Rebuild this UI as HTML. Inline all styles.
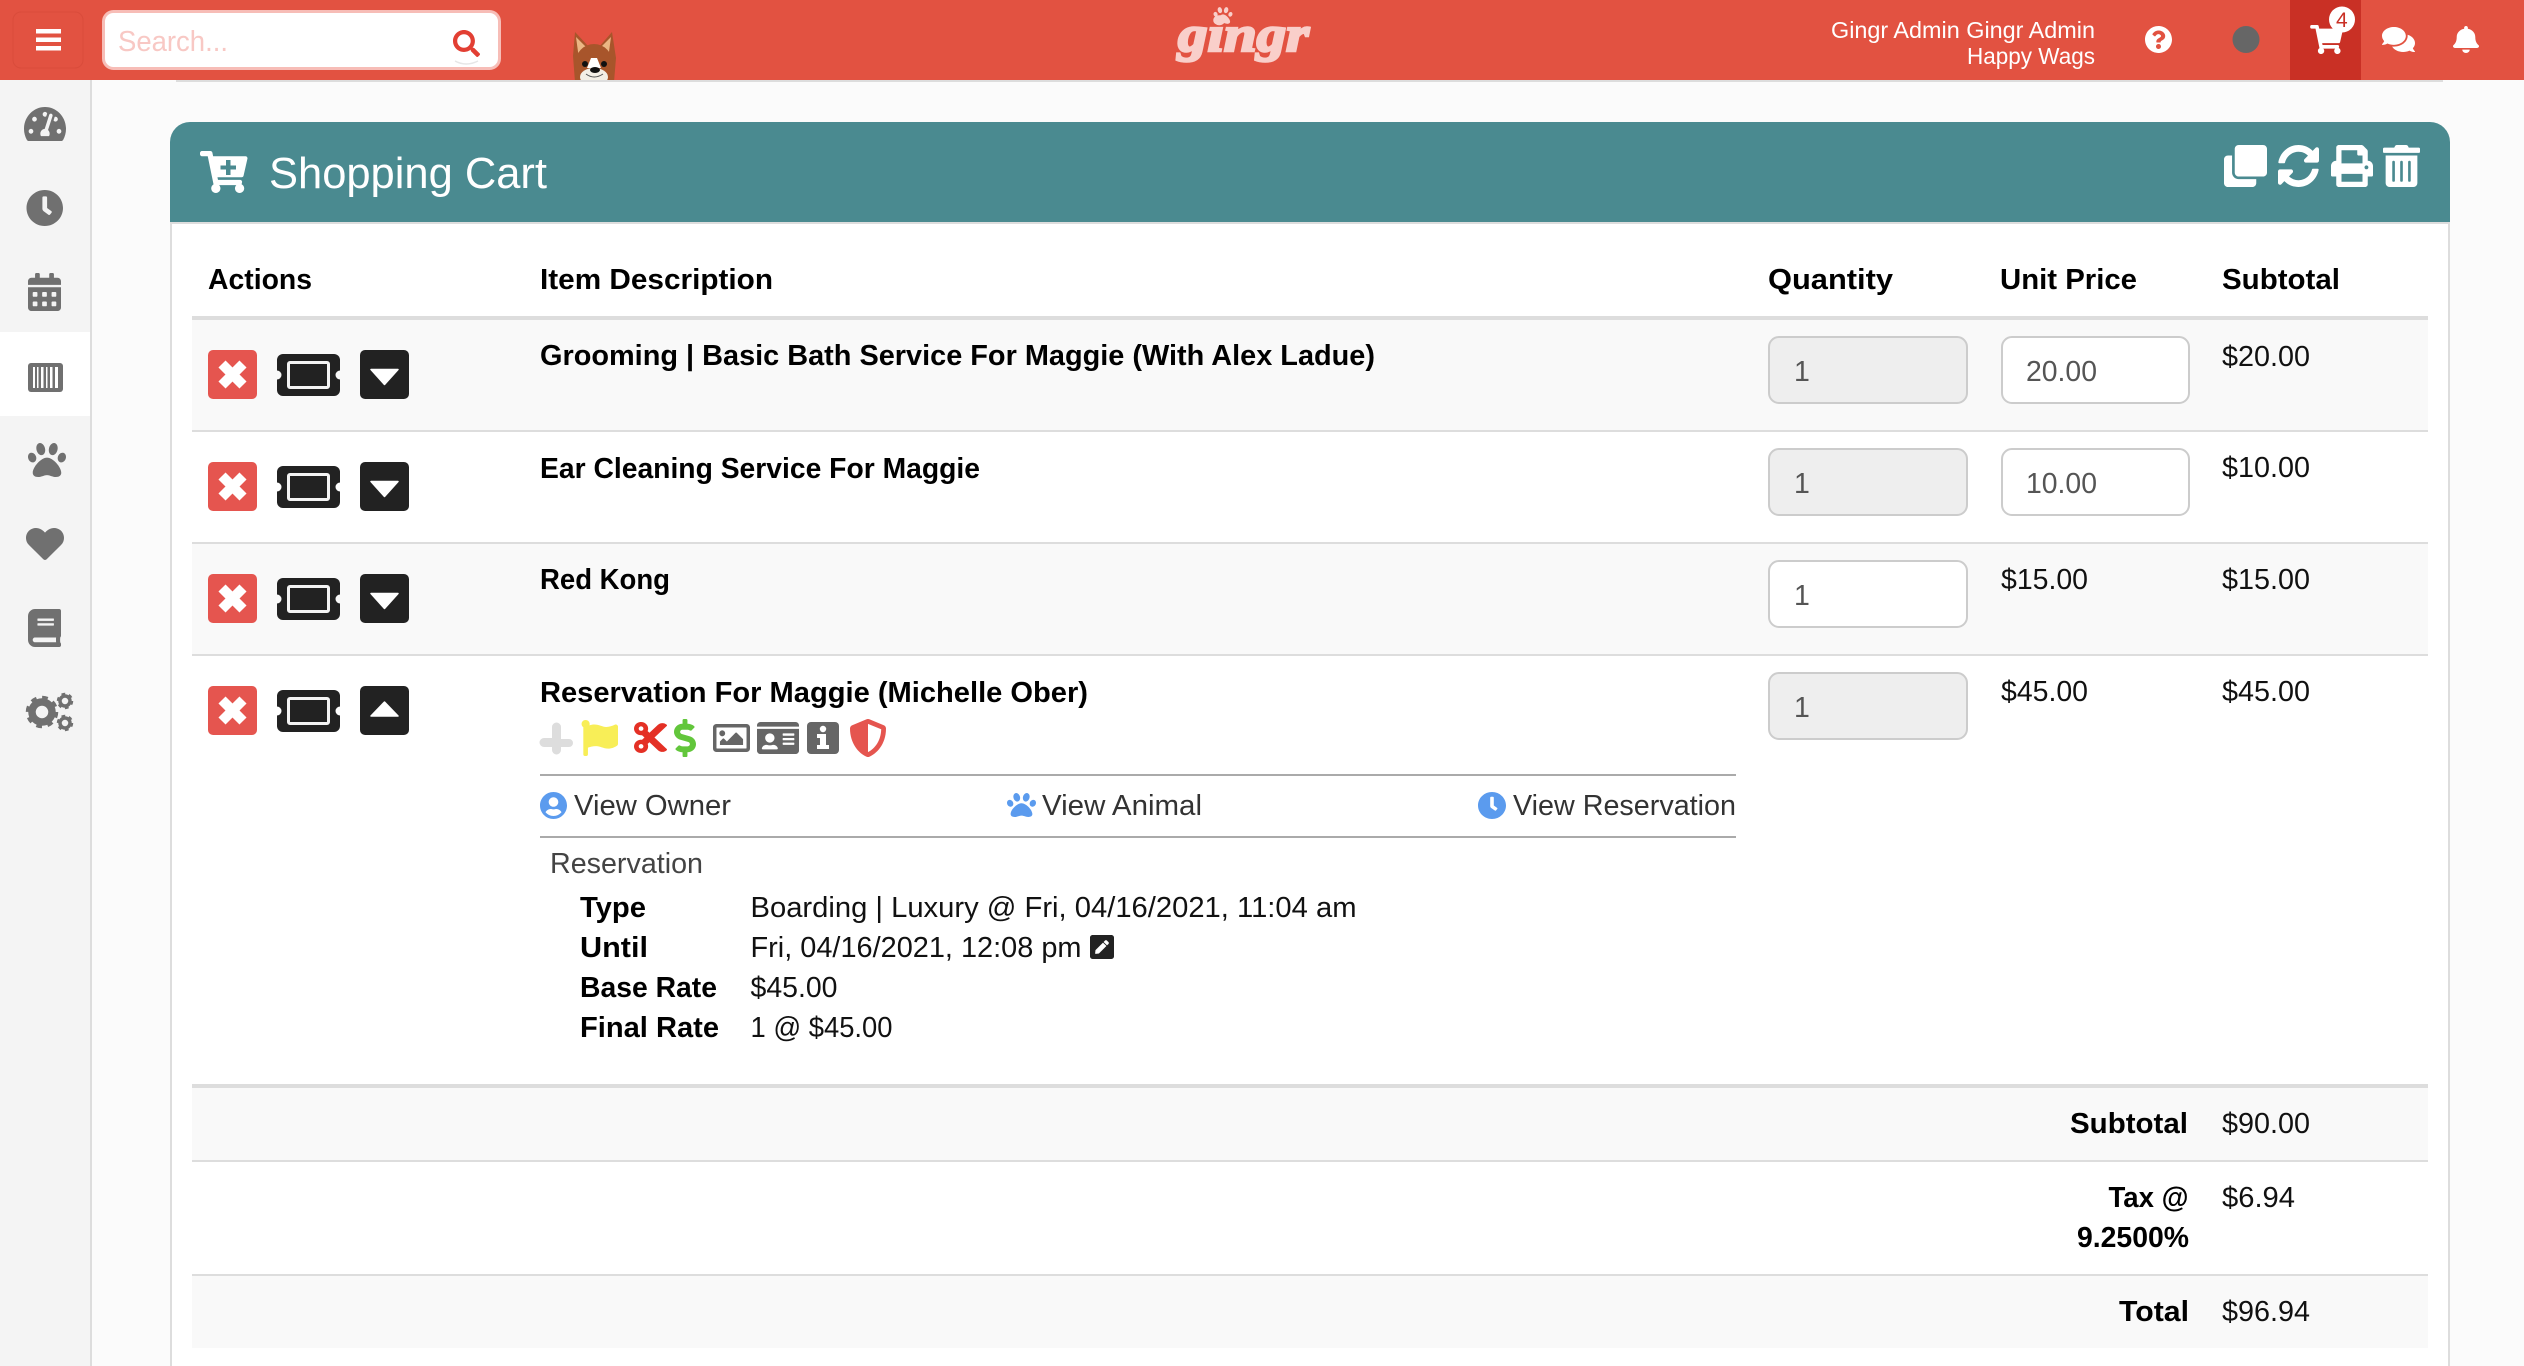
<!DOCTYPE html>
<html lang="en"><head><meta charset="utf-8"><title>Shopping Cart</title>
<style>
html,body{margin:0;padding:0;background:#fbfbfb}
svg.page{display:block;position:absolute;left:0;top:0}
text{font-family:"Liberation Sans",sans-serif;font-size:28.5px;fill:#111}
.b{font-weight:700;fill:#000}
.v{fill:#333}
.i{fill:#555}
</style></head><body>
<svg class="page" xmlns="http://www.w3.org/2000/svg" width="2524" height="1366" viewBox="0 0 2524 1366">
<defs>
<clipPath id="hc"><rect x="0" y="0" width="2524" height="80"/></clipPath>
<g id="xb"><rect width="49" height="49" rx="5" fill="#E5554F"/><path d="M14 14L35 35M35 14L14 35" stroke="#fff" stroke-width="10" fill="none"/></g>
<g id="dn"><rect width="49" height="49" rx="5" fill="#222"/><path d="M11 19.5H38L24.5 34.5Z" fill="#fff" stroke="#fff" stroke-width="1.5" stroke-linejoin="round"/></g>
<g id="up"><rect width="49" height="49" rx="5" fill="#222"/><path d="M11 30H38L24.5 16Z" fill="#fff" stroke="#fff" stroke-width="1.5" stroke-linejoin="round"/></g>
</defs>

<!-- page backgrounds -->
<rect width="2524" height="1366" fill="#fbfbfb"/>
<rect x="0" y="80" width="90" height="1286" fill="#f4f4f4"/>
<rect x="90" y="80" width="2" height="1286" fill="#ddd"/>
<rect x="0" y="332" width="90" height="84" fill="#fff"/>
<rect x="176" y="80" width="2267" height="2" fill="#ddd"/>

<!-- header -->
<rect width="2524" height="80" fill="#E25241"/>
<rect x="13" y="12" width="70" height="56" rx="8" fill="#E25241" stroke="#d94c3b" stroke-width="1"/>
<rect x="36" y="29" width="25" height="4.5" fill="#fff"/><rect x="36" y="37.5" width="25" height="4.5" fill="#fff"/><rect x="36" y="46" width="25" height="4.5" fill="#fff"/>
<rect x="103.5" y="11.5" width="396" height="57" rx="10" fill="#fff" stroke="#f7bdb7" stroke-width="3"/>
<text x="118" y="51" style="fill:#f8c8c4" textLength="110" lengthAdjust="spacingAndGlyphs">Search...</text>
<svg x="452" y="30" width="29" height="27" viewBox="0 0 512 512"><path fill="#E23F33" d="M505 442.7L405.3 343c-4.5-4.5-10.6-7-17-7H372c27.6-35.3 44-79.7 44-128C416 93.1 322.9 0 208 0S0 93.1 0 208s93.1 208 208 208c48.3 0 92.7-16.4 128-44v16.3c0 6.4 2.5 12.5 7 17l99.7 99.7c9.4 9.4 24.6 9.4 33.9 0l28.3-28.3c9.4-9.4 9.4-24.6.1-34zM208 336c-70.7 0-128-57.2-128-128 0-70.7 57.2-128 128-128 70.7 0 128 57.2 128 128 0 70.7-57.2 128-128 128z"/></svg>
<path d="M455 61Q466 67 478 61" fill="none" stroke="#e6e6e6" stroke-width="1.5"/>

<!-- dog -->
<g clip-path="url(#hc)">
<path d="M575 32L589 47L599 47L612 32L616 58L614 82H575L573 56Z" fill="#A8552B"/>
<path d="M576 37L587 48L579 59Z" fill="#EBB684"/><path d="M611 37L600 48L608 59Z" fill="#EBB684"/>
<ellipse cx="594" cy="64" rx="19" ry="20" fill="#A8552B"/>
<path d="M591 58H597L601 68H587Z" fill="#fff"/>
<ellipse cx="594" cy="77" rx="14" ry="9" fill="#F3EFE6"/>
<circle cx="585" cy="64" r="3" fill="#111"/><circle cx="604" cy="64" r="3" fill="#111"/>
<ellipse cx="595" cy="70" rx="5" ry="3" fill="#111"/>
<path d="M586 74Q594 80 603 74" fill="none" stroke="#555" stroke-width="1"/>
</g>

<!-- logo -->
<text x="1178" y="51" style="font-family:'Liberation Serif',serif;font-weight:700;font-style:italic;font-size:50px;fill:#F9CFCA;stroke:#F9CFCA;stroke-width:2.5px" textLength="131" lengthAdjust="spacingAndGlyphs">gingr</text>
<svg x="1213" y="6" width="20" height="19" viewBox="0 0 512 512"><path fill="#F9CFCA" d="M256 224c-79.41 0-192 122.76-192 200.25 0 34.9 26.81 55.75 71.74 55.75 48.84 0 81.09-25.08 120.26-25.08 39.51 0 71.85 25.08 120.26 25.08 44.93 0 71.74-20.85 71.74-55.75C448 346.76 335.41 224 256 224zm-147.28-12.61c-10.4-34.65-42.44-57.09-71.56-50.13-29.12 6.96-44.29 40.69-33.89 75.34 10.4 34.65 42.44 57.09 71.56 50.13 29.12-6.96 44.29-40.69 33.89-75.34zm84.72-20.78c30.94-8.14 46.42-49.94 34.58-93.36s-46.52-72.01-77.46-63.87-46.42 49.94-34.58 93.36c11.84 43.42 46.52 72.02 77.46 63.87zm281.39-29.34c-29.12-6.96-61.15 15.48-71.56 50.13-10.4 34.65 4.77 68.38 33.89 75.34 29.12 6.96 61.15-15.48 71.56-50.13 10.4-34.65-4.77-68.38-33.89-75.34zm-156.27 29.34c30.94 8.14 65.62-20.45 77.46-63.87 11.84-43.42-3.64-85.21-34.58-93.36s-65.62 20.45-77.46 63.87c-11.84 43.42 3.64 85.22 34.58 93.36z"/></svg>

<!-- header right -->
<text x="1831" y="38" style="font-size:23.5px;fill:#fff" textLength="264" lengthAdjust="spacingAndGlyphs">Gingr Admin Gingr Admin</text>
<text x="1967" y="64" style="font-size:23.5px;fill:#fff" textLength="128" lengthAdjust="spacingAndGlyphs">Happy Wags</text>
<svg x="2145" y="26" width="27" height="27" viewBox="8 8 496 496"><path fill="#fff" d="M504 256c0 136.997-111.043 248-248 248S8 392.997 8 256C8 119.083 119.043 8 256 8s248 111.083 248 248zM262.655 90c-54.497 0-89.255 22.957-116.549 63.758-3.536 5.286-2.353 12.415 2.715 16.258l34.699 26.31c5.205 3.947 12.621 3.008 16.665-2.122 17.864-22.658 30.113-35.797 57.303-35.797 20.429 0 45.698 13.148 45.698 32.958 0 14.976-12.363 22.667-32.534 33.976C247.128 238.528 216 254.941 216 296v4c0 6.627 5.373 12 12 12h56c6.627 0 12-5.373 12-12v-1.333c0-28.462 83.186-29.647 83.186-106.667 0-58.002-60.165-102-116.531-102zM256 338c-25.365 0-46 20.635-46 46 0 25.364 20.635 46 46 46s46-20.636 46-46c0-25.365-20.635-46-46-46z"/></svg>
<circle cx="2246" cy="39.5" r="13.5" fill="#666"/>
<rect x="2290" y="0" width="71" height="80" fill="#C93025"/>
<svg x="2310" y="25" width="33" height="29" viewBox="0 0 576 512"><path fill="#fff" d="M528.12 301.319l47.273-208C578.806 78.301 567.391 64 551.99 64H159.208l-9.166-44.81C147.758 8.021 137.93 0 126.529 0H24C10.745 0 0 10.745 0 24v16c0 13.255 10.745 24 24 24h69.883l70.248 343.435C147.325 417.1 136 435.222 136 456c0 30.928 25.072 56 56 56s56-25.072 56-56c0-15.674-6.447-29.835-16.824-40h209.647C430.447 426.165 424 440.326 424 456c0 30.928 25.072 56 56 56s56-25.072 56-56c0-22.172-12.888-41.332-31.579-50.405l5.517-24.276c3.413-15.018-8.002-29.319-23.403-29.319H218.117l-6.545-32h293.145c11.206 0 20.92-7.754 23.403-18.681z"/></svg>
<circle cx="2342" cy="19.5" r="13" fill="#fff"/>
<text x="2336" y="27" style="font-size:21px;fill:#C93025">4</text>
<svg x="2382" y="27" width="33" height="25" viewBox="0 32 576 448" preserveAspectRatio="none"><path fill="#fff" d="M416 192c0-88.4-93.1-160-208-160S0 103.6 0 192c0 34.3 14.1 65.9 38 92-13.4 30.2-35.5 54.2-35.8 54.5-2.2 2.3-2.8 5.7-1.5 8.7S4.8 352 8 352c36.6 0 66.9-12.3 88.7-25 32.2 15.7 70.3 25 111.3 25 114.9 0 208-71.6 208-160zm122 220c23.9-26 38-57.7 38-92 0-66.9-53.5-124.2-129.3-148.1.9 6.6 1.3 13.3 1.3 20.1 0 105.9-107.7 192-240 192-10.8 0-21.3-.8-31.7-1.9C207.8 439.6 281.8 480 368 480c41 0 79.1-9.2 111.3-25 21.8 12.7 52.1 25 88.7 25 3.2 0 6.1-1.9 7.3-4.8 1.3-2.9.7-6.3-1.5-8.7-.3-.3-22.4-24.2-35.8-54.5z"/></svg>
<svg x="2453" y="26" width="26" height="27" viewBox="0 0 448 512" preserveAspectRatio="none"><path fill="#fff" d="M224 512c35.32 0 63.97-28.65 63.97-64H160.03c0 35.35 28.65 64 63.97 64zm215.39-149.71c-19.32-20.76-55.47-51.99-55.47-154.29 0-77.7-54.48-139.9-127.94-155.16V32c0-17.67-14.32-32-31.98-32s-31.98 14.33-31.98 32v20.84C118.56 68.1 64.08 130.3 64.08 208c0 102.3-36.15 133.53-55.47 154.29-6 6.45-8.66 14.16-8.61 21.71.11 16.4 12.98 32 32.1 32h383.8c19.12 0 32-15.6 32.1-32 .05-7.55-2.61-15.27-8.61-21.71z"/></svg>

<!-- sidebar icons -->
<svg x="24" y="107" width="42" height="34" viewBox="0 32 576 448" preserveAspectRatio="none"><path fill="#707070" d="M288 32C128.94 32 0 160.94 0 320c0 52.8 14.25 102.26 39.06 144.8 5.61 9.62 16.3 15.2 27.44 15.2h443c11.14 0 21.83-5.58 27.44-15.2C561.75 422.26 576 372.8 576 320c0-159.06-128.94-288-288-288zm0 64c14.71 0 26.58 10.13 30.32 23.65-1.11 2.26-2.64 4.23-3.45 6.67l-9.22 27.67c-5.13 3.49-10.97 6.01-17.64 6.01-17.67 0-32-14.33-32-32S270.33 96 288 96zM96 384c-17.67 0-32-14.33-32-32s14.33-32 32-32 32 14.33 32 32-14.33 32-32 32zm48-160c-17.67 0-32-14.33-32-32s14.33-32 32-32 32 14.33 32 32-14.33 32-32 32zm246.77-72.41l-61.33 184C343.13 347.33 352 364.54 352 384c0 11.72-3.38 22.55-8.88 32H232.88c-5.5-9.45-8.88-20.28-8.88-32 0-33.94 26.5-61.43 59.9-63.59l61.34-184.01c4.17-12.56 17.73-19.45 30.36-15.17 12.57 4.19 19.35 17.77 15.17 30.36zm14.66 57.2l15.52-46.55c3.47-1.29 7.13-2.23 11.05-2.23 17.67 0 32 14.33 32 32s-14.33 32-32 32c-11.38-.01-20.89-6.28-26.57-15.22zM480 384c-17.67 0-32-14.33-32-32s14.33-32 32-32 32 14.33 32 32-14.33 32-32 32z"/></svg>
<svg x="26.5" y="190" width="36.5" height="36" viewBox="8 8 496 496" preserveAspectRatio="none"><path fill="#707070" d="M256,8C119,8,8,119,8,256S119,504,256,504,504,393,504,256,393,8,256,8Zm92.49,313h0l-20,25a16,16,0,0,1-22.49,2.5h0l-67-49.72a40,40,0,0,1-15-31.23V112a16,16,0,0,1,16-16h32a16,16,0,0,1,16,16V256l58,42.5A16,16,0,0,1,348.49,321Z"/></svg>
<svg x="28" y="273" width="33" height="38" viewBox="0 0 448 512" preserveAspectRatio="none"><path fill="#707070" d="M0 464c0 26.5 21.5 48 48 48h352c26.5 0 48-21.5 48-48V192H0v272zm320-196c0-6.6 5.4-12 12-12h40c6.6 0 12 5.4 12 12v40c0 6.6-5.4 12-12 12h-40c-6.6 0-12-5.4-12-12v-40zm0 128c0-6.6 5.4-12 12-12h40c6.6 0 12 5.4 12 12v40c0 6.6-5.4 12-12 12h-40c-6.6 0-12-5.4-12-12v-40zM192 268c0-6.6 5.4-12 12-12h40c6.6 0 12 5.4 12 12v40c0 6.6-5.4 12-12 12h-40c-6.6 0-12-5.4-12-12v-40zm0 128c0-6.6 5.4-12 12-12h40c6.6 0 12 5.4 12 12v40c0 6.6-5.4 12-12 12h-40c-6.6 0-12-5.4-12-12v-40zM64 268c0-6.6 5.4-12 12-12h40c6.6 0 12 5.4 12 12v40c0 6.6-5.4 12-12 12H76c-6.6 0-12-5.4-12-12v-40zm0 128c0-6.6 5.4-12 12-12h40c6.6 0 12 5.4 12 12v40c0 6.6-5.4 12-12 12H76c-6.6 0-12-5.4-12-12v-40zM400 64h-48V16c0-8.8-7.2-16-16-16h-32c-8.8 0-16 7.2-16 16v48H160V16c0-8.8-7.2-16-16-16h-32c-8.8 0-16 7.2-16 16v48H48C21.5 64 0 85.5 0 112v48h448v-48c0-26.5-21.5-48-48-48z"/></svg>
<rect x="28" y="363" width="35" height="29" rx="3" fill="#707070"/>
<g fill="#fff"><rect x="33" y="367" width="2" height="21"/><rect x="37" y="367" width="1.5" height="21"/><rect x="41" y="367" width="2.5" height="21"/><rect x="46" y="367" width="1.5" height="21"/><rect x="50" y="367" width="2.5" height="21"/><rect x="55" y="367" width="3" height="21"/></g>
<svg x="28" y="443" width="38" height="34" viewBox="0 32 512 448" preserveAspectRatio="none"><path fill="#707070" d="M256 224c-79.41 0-192 122.76-192 200.25 0 34.9 26.81 55.75 71.74 55.75 48.84 0 81.09-25.08 120.26-25.08 39.51 0 71.85 25.08 120.26 25.08 44.93 0 71.74-20.85 71.74-55.75C448 346.76 335.41 224 256 224zm-147.28-12.61c-10.4-34.65-42.44-57.09-71.56-50.13-29.12 6.96-44.29 40.69-33.89 75.34 10.4 34.65 42.44 57.09 71.56 50.13 29.12-6.96 44.29-40.69 33.89-75.34zm84.72-20.78c30.94-8.14 46.42-49.94 34.58-93.36s-46.52-72.01-77.46-63.87-46.42 49.94-34.58 93.36c11.84 43.42 46.52 72.02 77.46 63.87zm281.39-29.34c-29.12-6.96-61.15 15.48-71.56 50.13-10.4 34.65 4.77 68.38 33.89 75.34 29.12 6.96 61.15-15.48 71.56-50.13 10.4-34.65-4.77-68.38-33.89-75.34zm-156.27 29.34c30.94 8.14 65.62-20.45 77.46-63.87 11.84-43.42-3.64-85.21-34.58-93.36s-65.62 20.45-77.46 63.87c-11.84 43.42 3.64 85.22 34.58 93.36z"/></svg>
<svg x="26" y="528" width="38" height="32" viewBox="0 32 512 448" preserveAspectRatio="none"><path fill="#707070" d="M462.3 62.6C407.5 15.9 326 24.3 275.7 76.2L256 96.5l-19.7-20.3C186.1 24.3 104.5 15.9 49.7 62.6c-62.8 53.6-66.1 149.8-9.9 207.9l193.5 199.8c12.5 12.9 32.8 12.9 45.3 0l193.5-199.8c56.3-58.1 53-154.3-9.8-207.9z"/></svg>
<svg x="28" y="609" width="33" height="38" viewBox="0 0 448 512" preserveAspectRatio="none"><path fill="#707070" d="M448 360V24c0-13.3-10.7-24-24-24H96C43 0 0 43 0 96v320c0 53 43 96 96 96h328c13.3 0 24-10.7 24-24v-16c0-7.5-3.5-14.3-8.9-18.7-4.2-15.4-4.2-59.3 0-74.7 5.4-4.3 8.9-11.1 8.9-18.6zM128 134c0-3.3 2.7-6 6-6h212c3.3 0 6 2.7 6 6v20c0 3.3-2.7 6-6 6H134c-3.3 0-6-2.7-6-6v-20zm0 64c0-3.3 2.7-6 6-6h212c3.3 0 6 2.7 6 6v20c0 3.3-2.7 6-6 6H134c-3.3 0-6-2.7-6-6v-20zm253.4 250H96c-17.7 0-32-14.3-32-32 0-17.6 14.4-32 32-32h285.4c-1.9 17.1-1.9 46.9 0 64z"/></svg>
<g fill="none" stroke="#707070">
<circle cx="42" cy="712" r="10" stroke-width="7.5"/>
<circle cx="42" cy="712" r="14" stroke-width="4.5" stroke-dasharray="5.5 5.5"/>
<circle cx="65" cy="701" r="5" stroke-width="3.5"/>
<circle cx="65" cy="701" r="7" stroke-width="2.5" stroke-dasharray="3.66 3.67"/>
<circle cx="65" cy="723" r="5" stroke-width="3.5"/>
<circle cx="65" cy="723" r="7" stroke-width="2.5" stroke-dasharray="3.66 3.67"/>
</g>

<!-- panel -->
<rect x="170" y="222" width="2280" height="1144" fill="#fff"/>
<rect x="170" y="222" width="2" height="1144" fill="#ddd"/>
<rect x="2448" y="222" width="2" height="1144" fill="#ddd"/>
<rect x="170" y="222" width="2280" height="2" fill="#ddd"/>
<path d="M170 222V142A20 20 0 0 1 190 122H2430A20 20 0 0 1 2450 142V222Z" fill="#4A8A90"/>
<svg x="200" y="151" width="47.5" height="42" viewBox="0 0 576 512" preserveAspectRatio="none"><path fill="#fff" d="M528.12 301.319l47.273-208C578.806 78.301 567.391 64 551.99 64H159.208l-9.166-44.81C147.758 8.021 137.93 0 126.529 0H24C10.745 0 0 10.745 0 24v16c0 13.255 10.745 24 24 24h69.883l70.248 343.435C147.325 417.1 136 435.222 136 456c0 30.928 25.072 56 56 56s56-25.072 56-56c0-15.674-6.447-29.835-16.824-40h209.647C430.447 426.165 424 440.326 424 456c0 30.928 25.072 56 56 56s56-25.072 56-56c0-22.172-12.888-41.332-31.579-50.405l5.517-24.276c3.413-15.018-8.002-29.319-23.403-29.319H218.117l-6.545-32h293.145c11.206 0 20.92-7.754 23.403-18.681z"/></svg>
<path d="M226 160h4.5v5.5h5.5v4h-5.5v5.5h-4.5v-5.500h-5.500v-4h5.500z" fill="#4A8A90"/>
<text x="269" y="188" style="font-size:44px;fill:#fff" textLength="278" lengthAdjust="spacingAndGlyphs">Shopping Cart</text>
<svg x="2224" y="145" width="43" height="42" viewBox="0 0 512 512" preserveAspectRatio="none"><path fill="#fff" d="M464 0c26.51 0 48 21.49 48 48v288c0 26.51-21.49 48-48 48H176c-26.51 0-48-21.49-48-48V48c0-26.51 21.49-48 48-48h288M176 416c-44.112 0-80-35.888-80-80V128H48c-26.51 0-48 21.49-48 48v288c0 26.51 21.49 48 48 48h288c26.51 0 48-21.49 48-48v-48H176z"/></svg>
<svg x="2278" y="145" width="41" height="42" viewBox="8 8 496 496" preserveAspectRatio="none"><path fill="#fff" d="M370.72 133.28C339.458 104.008 298.888 87.962 255.848 88c-77.458.068-144.328 53.178-162.791 126.85-1.344 5.363-6.122 9.15-11.651 9.15H24.103c-7.498 0-13.194-6.807-11.807-14.176C33.933 94.924 134.813 8 256 8c66.448 0 126.791 26.136 171.315 68.685L463.03 40.97C478.149 25.851 504 36.559 504 57.941V192c0 13.255-10.745 24-24 24H345.941c-21.382 0-32.09-25.851-16.971-40.971l41.75-41.749zM32 296h134.059c21.382 0 32.09 25.851 16.971 40.971l-41.75 41.75c31.262 29.273 71.835 45.319 114.876 45.28 77.418-.07 144.315-53.144 162.787-126.849 1.344-5.363 6.122-9.15 11.651-9.15h57.304c7.498 0 13.194 6.807 11.807 14.176C478.067 417.076 377.187 504 256 504c-66.448 0-126.791-26.136-171.315-68.685L48.97 471.03C33.851 486.149 8 475.441 8 454.059V320c0-13.255 10.745-24 24-24z"/></svg>
<svg x="2331" y="145" width="42" height="42" viewBox="0 0 512 512" preserveAspectRatio="none"><path fill="#fff" d="M448 192V77.25c0-8.49-3.37-16.62-9.37-22.63L393.37 9.37c-6-6-14.14-9.37-22.63-9.37H96C78.33 0 64 14.33 64 32v160c-35.35 0-64 28.65-64 64v112c0 8.84 7.16 16 16 16h48v96c0 17.67 14.33 32 32 32h320c17.67 0 32-14.33 32-32v-96h48c8.84 0 16-7.16 16-16V256c0-35.35-28.65-64-64-64zm-64 256H128v-96h256v96zm0-224H128V64h192v48c0 8.84 7.16 16 16 16h48v96zm48 72c-13.25 0-24-10.75-24-24 0-13.26 10.75-24 24-24s24 10.74 24 24c0 13.25-10.75 24-24 24z"/></svg>
<svg x="2383" y="145" width="37" height="42" viewBox="0 0 448 512" preserveAspectRatio="none"><path fill="#fff" d="M32 464a48 48 0 0 0 48 48h288a48 48 0 0 0 48-48V128H32zm272-256a16 16 0 0 1 32 0v224a16 16 0 0 1-32 0zm-96 0a16 16 0 0 1 32 0v224a16 16 0 0 1-32 0zm-96 0a16 16 0 0 1 32 0v224a16 16 0 0 1-32 0zM432 32H312l-9.4-18.7A24 24 0 0 0 281.1 0H166.8a23.72 23.72 0 0 0-21.4 13.3L136 32H16A16 16 0 0 0 0 48v32a16 16 0 0 0 16 16h416a16 16 0 0 0 16-16V48a16 16 0 0 0-16-16z"/></svg>

<!-- table rows -->
<rect x="192" y="320" width="2236" height="110" fill="#f9f9f9"/>
<rect x="192" y="544" width="2236" height="110" fill="#f9f9f9"/>
<rect x="192" y="1088" width="2236" height="72" fill="#f9f9f9"/>
<rect x="192" y="1276" width="2236" height="72" fill="#f9f9f9"/>
<rect x="192" y="316" width="2236" height="4" fill="#ddd"/>
<rect x="192" y="430" width="2236" height="2" fill="#ddd"/>
<rect x="192" y="542" width="2236" height="2" fill="#ddd"/>
<rect x="192" y="654" width="2236" height="2" fill="#ddd"/>
<rect x="192" y="1084" width="2236" height="4" fill="#ddd"/>
<rect x="192" y="1160" width="2236" height="2" fill="#ddd"/>
<rect x="192" y="1274" width="2236" height="2" fill="#ddd"/>

<!-- table head -->
<text class="b" x="208" y="289" textLength="104" lengthAdjust="spacingAndGlyphs">Actions</text>
<text class="b" x="540" y="289" textLength="233" lengthAdjust="spacingAndGlyphs">Item Description</text>
<text class="b" x="1768" y="289" textLength="125" lengthAdjust="spacingAndGlyphs">Quantity</text>
<text class="b" x="2000" y="289" textLength="137" lengthAdjust="spacingAndGlyphs">Unit Price</text>
<text class="b" x="2222" y="289" textLength="118" lengthAdjust="spacingAndGlyphs">Subtotal</text>

<!-- action buttons -->
<use href="#xb" x="208" y="350"/><use href="#dn" x="360" y="350"/>
<use href="#xb" x="208" y="462"/><use href="#dn" x="360" y="462"/>
<use href="#xb" x="208" y="574"/><use href="#dn" x="360" y="574"/>
<use href="#xb" x="208" y="686"/><use href="#up" x="360" y="686"/>
<g>
<rect x="277" y="354" width="63" height="42" rx="6" fill="#222"/><circle cx="277" cy="375" r="4.5" fill="#f9f9f9"/><circle cx="340" cy="375" r="4.5" fill="#f9f9f9"/><rect x="288.5" y="362.5" width="40" height="25" fill="#222" stroke="#f4f4f4" stroke-width="3" rx="1.5"/>
<rect x="277" y="466" width="63" height="42" rx="6" fill="#222"/><circle cx="277" cy="487" r="4.5" fill="#fff"/><circle cx="340" cy="487" r="4.5" fill="#fff"/><rect x="288.5" y="474.5" width="40" height="25" fill="#222" stroke="#f4f4f4" stroke-width="3" rx="1.5"/>
<rect x="277" y="578" width="63" height="42" rx="6" fill="#222"/><circle cx="277" cy="599" r="4.5" fill="#f9f9f9"/><circle cx="340" cy="599" r="4.5" fill="#f9f9f9"/><rect x="288.5" y="586.5" width="40" height="25" fill="#222" stroke="#f4f4f4" stroke-width="3" rx="1.5"/>
<rect x="277" y="690" width="63" height="42" rx="6" fill="#222"/><circle cx="277" cy="711" r="4.5" fill="#fff"/><circle cx="340" cy="711" r="4.5" fill="#fff"/><rect x="288.5" y="698.5" width="40" height="25" fill="#222" stroke="#f4f4f4" stroke-width="3" rx="1.5"/>
</g>

<!-- row text -->
<text class="b" x="540" y="365" textLength="835" lengthAdjust="spacingAndGlyphs">Grooming | Basic Bath Service For Maggie (With Alex Ladue)</text>
<text class="b" x="540" y="478" textLength="440" lengthAdjust="spacingAndGlyphs">Ear Cleaning Service For Maggie</text>
<text class="b" x="540" y="589" textLength="130" lengthAdjust="spacingAndGlyphs">Red Kong</text>
<text class="b" x="540" y="702" textLength="548" lengthAdjust="spacingAndGlyphs">Reservation For Maggie (Michelle Ober)</text>

<!-- inputs -->
<rect x="1769" y="337" width="198" height="66" rx="10" fill="#eee" stroke="#ccc" stroke-width="2"/>
<rect x="1769" y="449" width="198" height="66" rx="10" fill="#eee" stroke="#ccc" stroke-width="2"/>
<rect x="1769" y="561" width="198" height="66" rx="10" fill="#fff" stroke="#ccc" stroke-width="2"/>
<rect x="1769" y="673" width="198" height="66" rx="10" fill="#eee" stroke="#ccc" stroke-width="2"/>
<rect x="2002" y="337" width="187" height="66" rx="10" fill="#fff" stroke="#ccc" stroke-width="2"/>
<rect x="2002" y="449" width="187" height="66" rx="10" fill="#fff" stroke="#ccc" stroke-width="2"/>
<text class="i" x="1794" y="381">1</text><text class="i" x="1794" y="493">1</text><text class="i" x="1794" y="605">1</text><text class="i" x="1794" y="717">1</text>
<text class="i" x="2026" y="381" textLength="71" lengthAdjust="spacingAndGlyphs">20.00</text>
<text class="i" x="2026" y="493" textLength="71" lengthAdjust="spacingAndGlyphs">10.00</text>

<!-- prices -->
<text x="2222" y="366" textLength="88" lengthAdjust="spacingAndGlyphs">$20.00</text>
<text x="2222" y="477" textLength="88" lengthAdjust="spacingAndGlyphs">$10.00</text>
<text x="2001" y="589" textLength="87" lengthAdjust="spacingAndGlyphs">$15.00</text>
<text x="2222" y="589" textLength="88" lengthAdjust="spacingAndGlyphs">$15.00</text>
<text x="2001" y="701" textLength="87" lengthAdjust="spacingAndGlyphs">$45.00</text>
<text x="2222" y="701" textLength="88" lengthAdjust="spacingAndGlyphs">$45.00</text>

<!-- reservation icons -->
<path d="M552 727a4 4 0 0 1 9 0v12h8a4 4 0 0 1 0 8h-8v3a4 4 0 0 1-9 0v-3h-8a4 4 0 0 1 0-9h8z" fill="#ddd"/>
<svg x="581" y="720" width="37" height="36" viewBox="0 0 512 512" preserveAspectRatio="none"><path fill="#F8EE57" d="M349.565 98.783C295.978 98.783 251.721 64 184.348 64c-24.955 0-47.309 4.384-68.045 12.013a55.947 55.947 0 0 0 3.586-23.562C118.117 24.015 94.806 1.206 66.338.048 34.345-1.254 8 24.296 8 56c0 19.026 9.497 35.825 24 45.945V488c0 13.255 10.745 24 24 24h16c13.255 0 24-10.745 24-24v-94.4c28.311-12.064 63.582-22.122 114.435-22.122 53.588 0 97.844 34.783 165.217 34.783 48.169 0 86.667-16.294 122.505-40.858C506.84 359.452 512 349.571 512 339.045v-243.1c0-23.393-24.269-38.87-45.485-29.016-34.338 15.948-76.454 31.854-116.95 31.854z"/></svg>
<svg x="634" y="722" width="33" height="31" viewBox="0 32 448 448" preserveAspectRatio="none"><path fill="#E43025" d="M278.06 256L444.48 89.57c4.69-4.69 4.69-12.29 0-16.97-32.8-32.8-85.99-32.8-118.79 0L210.18 188.12l-24.86-24.86c4.31-10.92 6.68-22.81 6.68-35.26 0-53.02-42.98-96-96-96S0 74.98 0 128s42.98 96 96 96c4.54 0 8.99-.32 13.36-.93L142.29 256l-32.93 32.93c-4.37-.61-8.83-.93-13.36-.93-53.02 0-96 42.98-96 96s42.98 96 96 96 96-42.98 96-96c0-12.45-2.37-24.34-6.68-35.26l24.86-24.86L325.69 439.4c32.8 32.8 85.99 32.8 118.79 0 4.69-4.68 4.69-12.28 0-16.97L278.06 256zM96 160c-17.64 0-32-14.36-32-32s14.36-32 32-32 32 14.36 32 32-14.36 32-32 32zm0 256c-17.64 0-32-14.36-32-32s14.36-32 32-32 32 14.36 32 32-14.36 32-32 32z"/></svg>
<svg x="674" y="719" width="22" height="38" viewBox="0 0 288 512" preserveAspectRatio="none"><path fill="#62C63B" d="M209.2 233.4l-108-31.6C88.7 198.2 80 186.5 80 173.5c0-16.3 13.2-29.5 29.5-29.5h66.3c12.2 0 24.2 3.7 34.2 10.5 6.1 4.1 14.3 3.1 19.5-2l34.8-34c7.1-6.9 6.1-18.4-1.8-24.5C238 74.8 207.4 64.1 176 64V16c0-8.8-7.2-16-16-16h-32c-8.8 0-16 7.2-16 16v48h-2.5C45.8 64-5.4 118.7.5 183.6c4.2 46.1 39.4 83.6 83.8 96.6l102.5 30c12.5 3.7 21.2 15.3 21.2 28.3 0 16.3-13.2 29.5-29.5 29.5h-66.3C100 368 88 364.3 78 357.5c-6.1-4.1-14.3-3.1-19.5 2l-34.8 34c-7.1 6.9-6.1 18.4 1.8 24.5 24.5 19.2 55.1 29.9 86.5 30v48c0 8.8 7.2 16 16 16h32c8.8 0 16-7.2 16-16v-48.2c46.6-.9 90.3-28.6 105.7-72.7 21.5-61.6-14.6-124.8-72.5-141.7z"/></svg>
<svg x="713" y="724" width="37" height="28" viewBox="0 64 512 384" preserveAspectRatio="none"><path fill="#666" d="M464 64H48C21.49 64 0 85.49 0 112v288c0 26.51 21.49 48 48 48h416c26.51 0 48-21.49 48-48V112c0-26.51-21.49-48-48-48zm-6 336H54a6 6 0 0 1-6-6V118a6 6 0 0 1 6-6h404a6 6 0 0 1 6 6v276a6 6 0 0 1-6 6zM128 152c-22.091 0-40 17.909-40 40s17.909 40 40 40 40-17.909 40-40-17.909-40-40-40zM96 352h320v-80l-87.515-87.515c-4.686-4.686-12.284-4.686-16.971 0L192 304l-39.515-39.515c-4.686-4.686-12.284-4.686-16.971 0L96 304v48z"/></svg>
<svg x="757" y="722" width="42" height="32" viewBox="0 32 576 448" preserveAspectRatio="none"><path fill="#666" d="M528 32H48C21.5 32 0 53.5 0 80v16h576V80c0-26.5-21.5-48-48-48zM0 432c0 26.5 21.5 48 48 48h480c26.5 0 48-21.5 48-48V128H0v304zm352-232c0-4.4 3.6-8 8-8h144c4.4 0 8 3.6 8 8v16c0 4.4-3.6 8-8 8H360c-4.4 0-8-3.6-8-8v-16zm0 64c0-4.4 3.6-8 8-8h144c4.4 0 8 3.6 8 8v16c0 4.4-3.6 8-8 8H360c-4.4 0-8-3.6-8-8v-16zm0 64c0-4.4 3.6-8 8-8h144c4.4 0 8 3.6 8 8v16c0 4.4-3.6 8-8 8H360c-4.4 0-8-3.6-8-8v-16zM176 192c35.3 0 64 28.7 64 64s-28.7 64-64 64-64-28.7-64-64 28.7-64 64-64zM67.1 396.2C75.5 370.5 99.6 352 128 352h8.2c12.3 5.1 25.7 8 39.8 8s27.6-2.9 39.8-8h8.2c28.4 0 52.5 18.5 60.9 44.2 3.2 9.9-5.2 19.8-15.6 19.8H82.7c-10.4 0-18.8-10-15.6-19.8z"/></svg>
<rect x="807" y="722" width="32" height="32" rx="4" fill="#666"/>
<circle cx="823" cy="729" r="3.2" fill="#fff"/><path d="M817 734h9v11h3v4h-12v-4h3v-7h-3z" fill="#fff"/>
<svg x="850" y="719" width="36" height="38" viewBox="16 0 480 512" preserveAspectRatio="none"><path fill="#E5554F" d="M466.5 83.7l-192-80a48.15 48.15 0 0 0-36.9 0l-192 80C27.7 91.1 16 108.6 16 128c0 198.5 114.5 335.7 221.5 380.3 11.8 4.9 25.1 4.9 36.9 0C360.1 472.6 496 349.3 496 128c0-19.4-11.7-36.9-29.5-44.3zM256.1 446.3l-.1-381 175.9 73.3c-3.3 151.4-82.1 261.1-175.8 307.7z"/></svg>

<!-- view links -->
<rect x="540" y="774" width="1196" height="2" fill="#aaa"/>
<rect x="540" y="836" width="1196" height="2" fill="#aaa"/>
<svg x="540" y="792" width="27" height="27" viewBox="0 8 496 496" preserveAspectRatio="none"><path fill="#5B9BEE" d="M248 8C111 8 0 119 0 256s111 248 248 248 248-111 248-248S385 8 248 8zm0 96c48.6 0 88 39.4 88 88s-39.4 88-88 88-88-39.4-88-88 39.4-88 88-88zm0 344c-58.7 0-111.3-26.6-146.5-68.2 18.8-35.4 55.6-59.8 98.5-59.8 2.4 0 4.8.4 7.1 1.1 13 4.2 26.6 6.9 40.9 6.9 14.3 0 28-2.7 40.9-6.9 2.3-.7 4.7-1.1 7.1-1.1 42.9 0 79.7 24.4 98.5 59.8C359.3 421.4 306.7 448 248 448z"/></svg>
<text class="v" x="574" y="815" textLength="157" lengthAdjust="spacingAndGlyphs">View Owner</text>
<svg x="1007" y="793" width="29" height="24" viewBox="0 32 512 448" preserveAspectRatio="none"><path fill="#5B9BEE" d="M256 224c-79.41 0-192 122.76-192 200.25 0 34.9 26.81 55.75 71.74 55.75 48.84 0 81.09-25.08 120.26-25.08 39.51 0 71.85 25.08 120.26 25.08 44.93 0 71.74-20.85 71.74-55.75C448 346.76 335.41 224 256 224zm-147.28-12.61c-10.4-34.65-42.44-57.09-71.56-50.13-29.12 6.96-44.29 40.69-33.89 75.34 10.4 34.65 42.44 57.09 71.56 50.13 29.12-6.96 44.29-40.69 33.89-75.34zm84.72-20.78c30.94-8.14 46.42-49.94 34.58-93.36s-46.52-72.01-77.46-63.87-46.42 49.94-34.58 93.36c11.84 43.42 46.52 72.02 77.46 63.87zm281.39-29.34c-29.12-6.96-61.15 15.48-71.56 50.13-10.4 34.65 4.77 68.38 33.89 75.34 29.12 6.96 61.15-15.48 71.56-50.13 10.4-34.65-4.77-68.38-33.89-75.34zm-156.27 29.34c30.94 8.14 65.62-20.45 77.46-63.87 11.84-43.42-3.64-85.21-34.58-93.36s-65.62 20.45-77.46 63.87c-11.84 43.42 3.64 85.22 34.58 93.36z"/></svg>
<text class="v" x="1042" y="815" textLength="160" lengthAdjust="spacingAndGlyphs">View Animal</text>
<svg x="1478" y="792" width="28" height="27" viewBox="8 8 496 496" preserveAspectRatio="none"><path fill="#5B9BEE" d="M256,8C119,8,8,119,8,256S119,504,256,504,504,393,504,256,393,8,256,8Zm92.49,313h0l-20,25a16,16,0,0,1-22.49,2.5h0l-67-49.72a40,40,0,0,1-15-31.23V112a16,16,0,0,1,16-16h32a16,16,0,0,1,16,16V256l58,42.5A16,16,0,0,1,348.49,321Z"/></svg>
<text class="v" x="1513" y="815" textLength="223" lengthAdjust="spacingAndGlyphs">View Reservation</text>

<!-- reservation details -->
<text x="550" y="873" style="fill:#444" textLength="153" lengthAdjust="spacingAndGlyphs">Reservation</text>
<text class="b" x="580" y="917" textLength="66" lengthAdjust="spacingAndGlyphs">Type</text>
<text class="b" x="580" y="957" textLength="68" lengthAdjust="spacingAndGlyphs">Until</text>
<text class="b" x="580" y="997" textLength="137" lengthAdjust="spacingAndGlyphs">Base Rate</text>
<text class="b" x="580" y="1037" textLength="139" lengthAdjust="spacingAndGlyphs">Final Rate</text>
<text x="750.5" y="917" textLength="606" lengthAdjust="spacingAndGlyphs">Boarding | Luxury @ Fri, 04/16/2021, 11:04 am</text>
<text x="750.5" y="957" textLength="331" lengthAdjust="spacingAndGlyphs">Fri, 04/16/2021, 12:08 pm</text>
<text x="750.5" y="997" textLength="87" lengthAdjust="spacingAndGlyphs">$45.00</text>
<text x="750.5" y="1037" textLength="142" lengthAdjust="spacingAndGlyphs">1 @ $45.00</text>
<svg x="1090" y="935" width="24" height="24" viewBox="0 32 448 448" preserveAspectRatio="none"><path fill="#222" d="M400 480H48c-26.5 0-48-21.5-48-48V80c0-26.5 21.5-48 48-48h352c26.5 0 48 21.5 48 48v352c0 26.5-21.5 48-48 48zM238.1 177.9L102.4 313.6l-6.3 57.1c-.8 7.6 5.6 14.1 13.3 13.3l57.1-6.3L302.2 242c2.3-2.3 2.3-6.1 0-8.5L246.7 178c-2.5-2.4-6.3-2.4-8.6-.1zM345 165.1L314.9 135c-9.4-9.4-24.6-9.4-33.9 0l-23.1 23.1c-2.3 2.3-2.3 6.1 0 8.5l55.5 55.5c2.3 2.3 6.1 2.3 8.5 0L345 199c9.3-9.3 9.3-24.5 0-33.9z"/></svg>

<!-- totals -->
<text class="b" x="2070" y="1133" textLength="118" lengthAdjust="spacingAndGlyphs">Subtotal</text>
<text x="2222" y="1133" textLength="88" lengthAdjust="spacingAndGlyphs">$90.00</text>
<text class="b" x="2108.5" y="1207" textLength="80" lengthAdjust="spacingAndGlyphs">Tax @</text>
<text x="2222" y="1207" textLength="73" lengthAdjust="spacingAndGlyphs">$6.94</text>
<text class="b" x="2077" y="1247" textLength="112" lengthAdjust="spacingAndGlyphs">9.2500%</text>
<text class="b" x="2119" y="1321" textLength="70" lengthAdjust="spacingAndGlyphs">Total</text>
<text x="2222" y="1321" textLength="88" lengthAdjust="spacingAndGlyphs">$96.94</text>
</svg>
</body></html>
